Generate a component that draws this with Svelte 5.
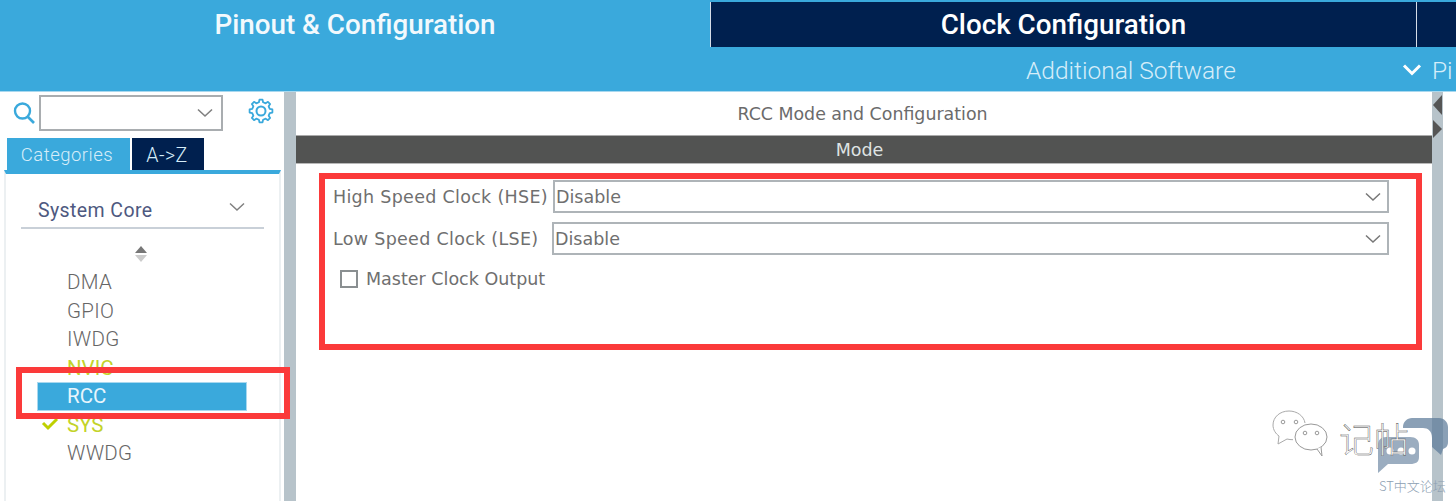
<script>
  const items = [
    { name: 'DMA', cls: '' },
    { name: 'GPIO', cls: '' },
    { name: 'IWDG', cls: '' },
    { name: 'NVIC', cls: 'ok' },
    { name: 'RCC', cls: 'sel' },
    { name: 'SYS', cls: 'ok', check: true },
    { name: 'WWDG', cls: '' }
  ];

  function gearPath(teeth, cx, cy, outer, inner) {
    const step = (Math.PI * 2) / teeth;
    const pts = [];
    for (let i = 0; i < teeth; i++) {
      const a = i * step - Math.PI / 2;
      const at = (r, o) => `${(cx + r * Math.cos(a + o * step)).toFixed(2)} ${(cy + r * Math.sin(a + o * step)).toFixed(2)}`;
      pts.push(at(inner, -0.3), at(outer, -0.17), at(outer, 0.17), at(inner, 0.3));
    }
    return 'M' + pts.join('L') + 'Z';
  }
  const gear = gearPath(8, 13, 13, 11.5, 9);
</script>

<div class="page">
  <header>
    <div class="tabs">
      <div class="tab active">Pinout &amp; Configuration</div>
      <div class="tab">Clock Configuration</div>
      <div class="tab last"></div>
    </div>
    <div class="subbar">
      <span class="add">Additional Software</span>
      <svg class="chev" width="20" height="14" viewBox="0 0 20 14"><path d="M2 2.500l8 8 8-8" fill="none" stroke="#fff" stroke-width="3"/></svg>
      <span class="pi">Pi</span>
    </div>
  </header>

  <div class="body">
    <aside>
      <div class="search">
        <svg class="lens" width="24" height="26" viewBox="0 0 24 26"><circle cx="10.500" cy="11" r="7.500" fill="none" stroke="#3aa9dc" stroke-width="2.400"/><path d="M16 17l6 6" stroke="#3aa9dc" stroke-width="2.600"/></svg>
        <div class="combo">
          <svg width="16" height="10" viewBox="0 0 16 10"><path d="M1 1.500l7 6.500 7-6.500" fill="none" stroke="#808080" stroke-width="1.600"/></svg>
        </div>
        <svg class="gear" width="26" height="26" viewBox="0 0 26 26"><path d={gear} fill="none" stroke="#3aa9dc" stroke-width="1.800" stroke-linejoin="round"/><circle cx="13" cy="13" r="4.500" fill="none" stroke="#3aa9dc" stroke-width="2"/></svg>
      </div>
      <div class="cat-tabs">
        <div class="cat on">Categories</div>
        <div class="cat off">A-&gt;Z</div>
      </div>
      <div class="panel">
        <div class="group">
          <span>System Core</span>
          <svg width="16" height="10" viewBox="0 0 16 10"><path d="M1 1.500l7 6.500 7-6.500" fill="none" stroke="#808080" stroke-width="1.500"/></svg>
        </div>
        <div class="sort">
          <svg width="14" height="18" viewBox="0 0 14 18"><path d="M7 1l6 7H1z" fill="#777"/><path d="M1 10h12l-6 7z" fill="#ccc"/></svg>
        </div>
        <ul>
          {#each items as it}
            <li class={it.cls}>
              {#if it.check}
                <svg class="check" width="18" height="14" viewBox="0 0 18 14"><path d="M2 6l5 5 9-9" fill="none" stroke="#bfd000" stroke-width="3"/></svg>
              {/if}
              <span class="lbl">{it.name}</span>
            </li>
          {/each}
        </ul>
      </div>
    </aside>
    <div class="splitter"></div>
    <main>
      <div class="title">RCC Mode and Configuration</div>
      <div class="mode">Mode</div>
      <div class="form">
        <div class="row r1">
          <label for="hse">High Speed Clock (HSE)</label>
          <div class="select" id="hse">Disable
            <svg width="16" height="10" viewBox="0 0 16 10"><path d="M1 1.500l7 6.500 7-6.500" fill="none" stroke="#777" stroke-width="1.500"/></svg>
          </div>
        </div>
        <div class="row r2">
          <label for="lse">Low Speed Clock (LSE)</label>
          <div class="select" id="lse">Disable
            <svg width="16" height="10" viewBox="0 0 16 10"><path d="M1 1.500l7 6.500 7-6.500" fill="none" stroke="#777" stroke-width="1.500"/></svg>
          </div>
        </div>
        <div class="chk"><span class="box"></span><span>Master Clock Output</span></div>
      </div>
    </main>
    <div class="rail">
      <svg width="11" height="44" viewBox="0 0 11 44"><path d="M10 1v20L1 11z" fill="#555"/><path d="M1 26v18l9-9z" fill="#555"/></svg>
    </div>
  </div>

  <div class="mark m1"></div>
  <div class="mark m2"></div>

  <div class="wm">
    <svg class="bub" width="58" height="50" viewBox="0 0 58 50">
      <path d="M17 1C8 1 1 7 1 15c0 5 3 9 6 11l-1 8 9-5c2 .5 4 .7 6 .7" fill="#fff" stroke="#aaa" stroke-width="1"/>
      <path d="M17 1c8 0 15 5 16 12" fill="none" stroke="#aaa" stroke-width="1"/>
      <ellipse cx="39" cy="27" rx="16" ry="13" fill="#fff" stroke="#999" stroke-width="1"/>
      <path d="M45 39l5 7-1-9" fill="#fff" stroke="#999" stroke-width="1"/>
      <circle cx="11" cy="12" r="1.800" fill="none" stroke="#999"/><circle cx="24" cy="12" r="1.800" fill="none" stroke="#999"/>
      <circle cx="33" cy="23" r="1.800" fill="none" stroke="#999"/><circle cx="45" cy="23" r="1.800" fill="none" stroke="#999"/>
    </svg>
    <svg class="st" width="72" height="56" viewBox="0 0 72 56">
      <path d="M26 9c0-5 4-9 9-9h27c5 0 9 4 9 9v15c0 4-2 6-5 7l-2 6-9-8V20c0-7-4-10-9-10H26z" fill="#5d7b9a" fill-opacity=".72"/>
      <path d="M9 19h24c6 0 9 3 9 8v12c0 5-3 7-9 7H11L1 55V27c0-5 3-8 8-8z" fill="#8a9fb5" fill-opacity=".85"/>
      <circle cx="13" cy="33" r="3.500" fill="#fff"/><circle cx="24" cy="33" r="3.500" fill="#fff"/><circle cx="35" cy="33" r="3.500" fill="#fff"/>
    </svg>
    <span class="ji">记帖</span>
    <span class="stt">ST中文论坛</span>
  </div>
</div>

<style>
  :global(body) { margin: 0; background: #fff; }
  .page { position: relative; width: 1456px; height: 501px; overflow: hidden; font-family: Roboto, "Liberation Sans", sans-serif; background: #fff; }

  header { height: 92px; background: #3aa9dc; border-bottom: 1px solid #a8d8ef; box-sizing: border-box; display: flex; flex-direction: column; }
  .tabs { display: flex; height: 47px; padding-top: 2px; box-sizing: border-box; }
  .tab { display: flex; align-items: center; justify-content: center; color: #fff; font-size: 27.800px; font-weight: 500; background: #00204f; border-left: 1px solid #d5dde8; box-sizing: border-box; }
  .tab.active { width: 710px; background: #3aa9dc; border-left: 0; padding-bottom: 1px; color: #f2f9fd; }
  .tab:not(.active) { width: 706px; padding-bottom: 1px; }
  .tab.last { flex: 1; width: auto; }

  .subbar { flex: 1; display: flex; align-items: center; padding-left: 1026px; color: #d6edf9; font-size: 24.500px; font-weight: 300; padding-top: 2px; box-sizing: border-box; }
  .add { width: 376px; white-space: nowrap; }
  .chev { margin-right: 10px; }
  .pi { white-space: nowrap; }

  .body { display: flex; height: 409px; }
  aside { width: 284px; background: #fff; display: flex; flex-direction: column; box-sizing: border-box; }
  .search { height: 46px; display: flex; align-items: flex-start; padding-left: 12px; padding-top: 3px; box-sizing: border-box; }
  .lens { margin-top: 5px; }
  .combo { width: 184px; height: 36px; margin-left: 3px; border: 2px solid #a9adb0; box-sizing: border-box; display: flex; align-items: center; justify-content: flex-end; padding-right: 8px; }
  .gear { margin-left: 25px; margin-top: 3px; }

  .cat-tabs { display: flex; padding-left: 7px; gap: 2px; height: 32px; }
  .cat { display: flex; align-items: center; justify-content: center; color: #d6edf9; font-size: 18.500px; font-weight: 300; letter-spacing: .5px; padding-top: 2px; box-sizing: border-box; }
  .cat.on { width: 123px; background: #3aa9dc; padding-right: 3px; }
  .cat.off { width: 72px; background: #00204f; font-size: 19.500px; padding-right: 2px; }

  .panel { flex: 1; margin-left: 4px; margin-right: 3px; border-top: 4px solid #3aa9dc; border-left: 2px solid #ecf0f2; border-right: 2px solid #ecf0f2; box-sizing: border-box; padding-left: 15px; padding-right: 15px; }
  .group { margin-top: 17px; height: 38px; border-bottom: 2px solid #c9d0d8; box-sizing: border-box; display: flex; align-items: flex-start; justify-content: space-between; padding: 8px 19px 0 17px; color: #4e5980; font-size: 19.500px; letter-spacing: .4px; }
  .group svg { margin-top: 3px; }
  .sort { display: flex; justify-content: center; margin-top: 16px; margin-left: -4px; height: 20px; }
  ul { list-style: none; margin: 3px 0 0; padding: 0; }
  li { position: relative; height: 28.500px; margin-left: 16px; width: 210px; box-sizing: border-box; padding-left: 30px; display: flex; align-items: center; font-size: 20.500px; color: #666; font-weight: 300; letter-spacing: .3px; }
  li.ok { color: #c3d32a; font-weight: 400; letter-spacing: 0; }
  li.sel { background: #3aa9dc; color: #e8f5fc; border: 1px solid #a8d8ef; padding-left: 29px; font-weight: 400; letter-spacing: 0; }
  .check { position: absolute; left: 4px; top: 6px; }

  .splitter { width: 12px; background: #b7c3ca; }
  main { width: 1136px; display: flex; flex-direction: column; background: #fff; }
  .title { height: 43px; display: flex; align-items: center; justify-content: center; color: #6b6b6b; padding-right: 3px; padding-top: 1px; box-sizing: border-box; font-family: "DejaVu Sans", sans-serif; font-size: 17.400px; }
  .mode { height: 29px; background: #525352; border-top: 1px solid #aaa; border-bottom: 1px solid #b8b8b8; box-sizing: border-box; display: flex; align-items: center; justify-content: center; color: #dfe3e3; font-size: 17.500px; padding-right: 9px; font-family: "DejaVu Sans", sans-serif; }
  .form { padding-left: 37px; color: #6f6f6f; font-family: "DejaVu Sans", sans-serif; font-size: 17.500px; }
  .row { display: flex; align-items: center; height: 33px; }
  .r1 { margin-top: 16px; }
  .r2 { margin-top: 9px; }
  label { letter-spacing: .3px; white-space: nowrap; }
  .r1 label { width: 220px; }
  .r2 label { width: 219px; }
  .select { height: 33px; box-sizing: border-box; border: 2px solid #aeb4b8; padding-left: 1px; display: flex; align-items: center; justify-content: space-between; padding-right: 6px; }
  .r1 .select { width: 836px; }
  .r2 .select { width: 837px; }
  .chk { display: flex; align-items: center; gap: 8px; margin-top: 14px; margin-left: 7px; }
  .box { width: 18px; height: 18px; border: 2px solid #8a8f91; box-sizing: border-box; }

  .rail { width: 11px; background: #b7c3ca; }
  .rail svg { display: block; margin-top: 2px; }

  .mark { position: absolute; border: 6px solid #fb3a3a; box-sizing: border-box; pointer-events: none; }
  .m1 { left: 319px; top: 173px; width: 1103px; height: 177px; }
  .m2 { left: 16px; top: 367px; width: 274px; height: 52px; }

  .wm { position: absolute; left: 0; top: 0; width: 1456px; height: 501px; pointer-events: none; }
  .bub { position: absolute; left: 1272px; top: 410px; }
  .st { position: absolute; left: 1377px; top: 418px; }
  .ji { position: absolute; left: 1339px; top: 416px; font-family: "Noto Sans CJK SC", sans-serif; font-size: 35px; line-height: 44px; color: #fff; font-weight: 300; -webkit-text-stroke: .4px #444; }
  .stt { position: absolute; left: 1379px; top: 478px; font-family: "Noto Sans CJK SC", sans-serif; font-size: 13px; line-height: 15px; color: #8da0b2; font-weight: 300; }
</style>
